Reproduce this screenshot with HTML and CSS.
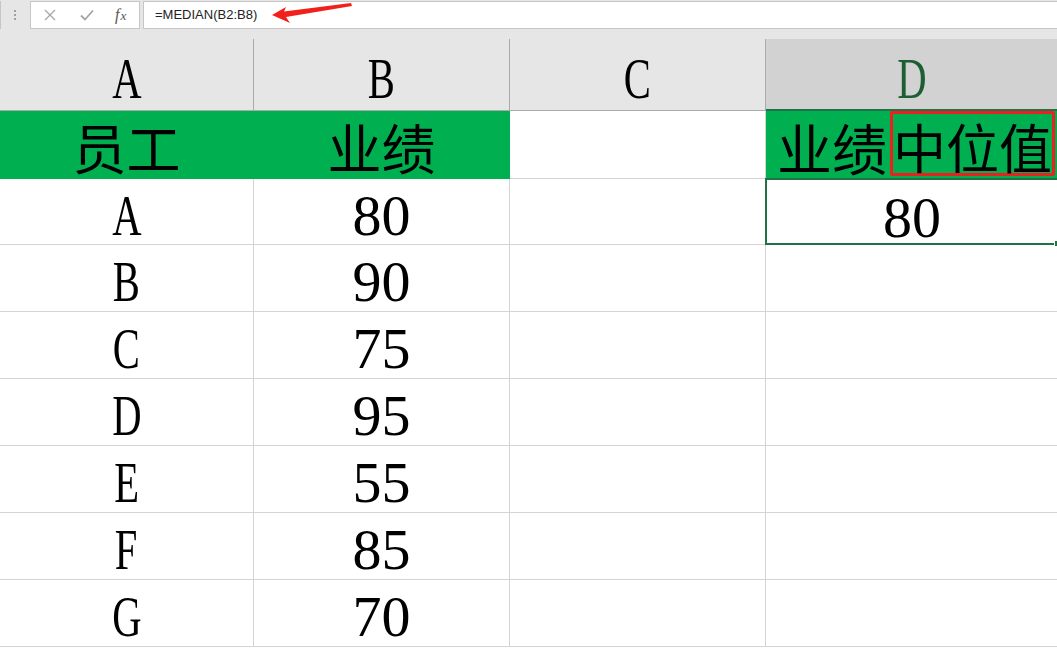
FILE: index.html
```html
<!DOCTYPE html>
<html lang="zh">
<head>
<meta charset="utf-8">
<title>MEDIAN</title>
<link rel="stylesheet" href="styles.css">
</head>
<body>
<div class="app">
  <div class="toolbar">
    <div class="grip"><span></span><span></span><span></span></div>
    <div class="namebox">
      <svg class="ico" width="12" height="12" viewBox="0 0 12 12"><path d="M1 1L11 11M11 1L1 11" stroke="#a6a6a6" stroke-width="1.3" fill="none"/></svg>
      <svg class="ico" width="14" height="12" viewBox="0 0 14 12"><path d="M1 6.5L5 10.5L13 1.5" stroke="#a6a6a6" stroke-width="1.8" fill="none"/></svg>
      <span class="fx">f<i>x</i></span>
    </div>
    <div class="formula">=MEDIAN(B2:B8)</div>
    <svg class="arrow" width="90" height="30" viewBox="0 0 90 30"><polygon points="1,15 15,7 13,11.5 80,3 81,6 15,17 19,23" fill="#f2201a"/></svg>
  </div>
  <div class="sheet">
    <div class="hd"><span class="ltr">A</span></div>
    <div class="hd"><span class="ltr">B</span></div>
    <div class="hd"><span class="ltr">C</span></div>
    <div class="hd sel"><span class="ltr">D</span></div>

    <div class="c green cjk">员工</div>
    <div class="c green cjk">业绩</div>
    <div class="c"></div>
    <div class="c green d1"><span class="d1a">业绩</span><span class="mark">中位值</span></div>

    <div class="c"><span class="ltr">A</span></div>
    <div class="c num">80</div>
    <div class="c"></div>
    <div class="c num active">80<span class="handle"></span></div>

    <div class="c"><span class="ltr">B</span></div>
    <div class="c num">90</div>
    <div class="c"></div>
    <div class="c"></div>

    <div class="c"><span class="ltr">C</span></div>
    <div class="c num">75</div>
    <div class="c"></div>
    <div class="c"></div>

    <div class="c"><span class="ltr">D</span></div>
    <div class="c num">95</div>
    <div class="c"></div>
    <div class="c"></div>

    <div class="c"><span class="ltr">E</span></div>
    <div class="c num">55</div>
    <div class="c"></div>
    <div class="c"></div>

    <div class="c"><span class="ltr">F</span></div>
    <div class="c num">85</div>
    <div class="c"></div>
    <div class="c"></div>

    <div class="c"><span class="ltr">G</span></div>
    <div class="c num">70</div>
    <div class="c"></div>
    <div class="c"></div>
  </div>
</div>
</body>
</html>
```

FILE: styles.css
```css
html, body {
  margin: 0;
  padding: 0;
  background: #ffffff;
}
.app {
  width: 1057px;
  height: 648px;
  overflow: hidden;
}
.toolbar {
  position: relative;
  height: 39px;
  box-sizing: border-box;
  padding-top: 1px;
  display: flex;
  align-items: flex-start;
  background: #e6e6e6;
}
.grip {
  width: 30px;
  height: 28px;
  box-sizing: border-box;
  border-left: 1px solid #c6c6c6;
  display: flex;
  flex-direction: column;
  align-items: center;
  justify-content: center;
  gap: 2px;
  padding-right: 1px;
}
.grip span {
  width: 2px;
  height: 2px;
  background: #a0a0a0;
}
.namebox {
  width: 110px;
  height: 28px;
  box-sizing: border-box;
  background: #fff;
  border: 1px solid #c6c6c6;
  display: flex;
  align-items: center;
  padding-left: 13px;
  gap: 24px;
}
.ico { display: block; }
.fx {
  font-family: "Liberation Serif", serif;
  font-style: italic;
  font-size: 16px;
  color: #555;
  margin-left: -3px;
  letter-spacing: 1px;
}
.fx i {
  font-size: 13px;
}
.formula {
  flex: 1;
  margin-left: 3px;
  height: 28px;
  box-sizing: border-box;
  background: #fff;
  border: 1px solid #c6c6c6;
  border-right: none;
  font-family: "Liberation Sans", Arial, sans-serif;
  font-size: 13px;
  color: #222;
  line-height: 26px;
  padding-left: 11px;
}
.arrow {
  position: absolute;
  left: 271px;
  top: 0;
}
.sheet {
  display: grid;
  grid-template-columns: 254px 256px 256px 291px;
  grid-template-rows: 72px 68px 66px repeat(6, 67px);
}
.hd {
  background: #e6e6e6;
  border-right: 1px solid #ababab;
  border-bottom: 1px solid #ababab;
  box-sizing: border-box;
  font-family: "Liberation Serif", serif;
  font-size: 58px;
  line-height: 58px;
  color: #000;
  display: flex;
  justify-content: center;
  align-items: flex-start;
  padding-top: 11px;
}
.hd.sel {
  background: #d2d2d2;
  color: #1e5e35;
  border-right: none;
  border-bottom: 2px solid #217346;
}
.c {
  position: relative;
  box-sizing: border-box;
  border-right: 1px solid #d4d4d4;
  border-bottom: 1px solid #d4d4d4;
  font-family: "Liberation Serif", serif;
  font-size: 58px;
  line-height: 58px;
  color: #000;
  display: flex;
  justify-content: center;
  align-items: flex-start;
  padding-top: 8px;
  white-space: nowrap;
}
.ltr {
  display: inline-block;
  transform: scaleX(0.7);
}
.sheet .c:nth-child(4n) {
  border-right: none;
}
.sheet .green {
  background: #00b050;
  border-right-color: #00b050;
  border-bottom-color: #00b050;
}
.sheet .cjk {
  font-family: "Noto Sans CJK SC", "Noto Sans CJK JP", sans-serif;
  font-size: 54px;
  line-height: 54px;
  padding-top: 9px;
}
.sheet .d1 {
  border-right: none;
  justify-content: flex-start;
  align-items: flex-start;
  padding: 0 0 0 11px;
  font-family: "Noto Sans CJK SC", "Noto Sans CJK JP", sans-serif;
}
.d1a {
  font-size: 55px;
  line-height: 55px;
  padding-top: 8px;
}
.mark {
  margin-left: 3px;
  height: 65px;
  box-sizing: border-box;
  border: 3px solid #ec2020;
  border-radius: 2px;
  font-size: 53px;
  line-height: 53px;
  padding-top: 6px;
}
.sheet .active {
  border: 2px solid #217346;
  margin-left: -1px;
  margin-top: -1px;
  padding-top: 9px;
}
.handle {
  position: absolute;
  right: -4px;
  bottom: -4px;
  width: 5px;
  height: 5px;
  background: #217346;
  border: 1px solid #fff;
}
```
